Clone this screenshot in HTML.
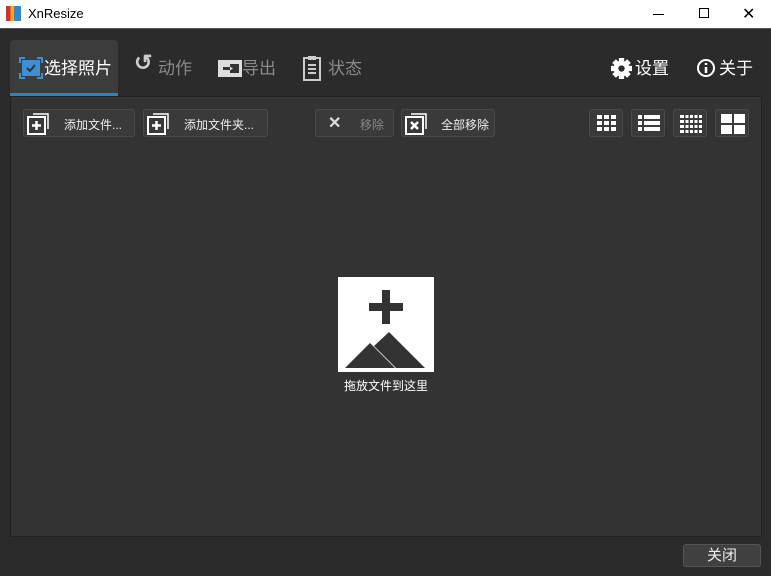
<!DOCTYPE html>
<html><head><meta charset="utf-8"><style>
*{margin:0;padding:0;box-sizing:border-box}
body{width:771px;height:576px;background:#2b2b2b;font-family:"Liberation Sans","Noto Sans CJK SC",sans-serif;position:relative;overflow:hidden;color:#fff}
.a{position:absolute}
.title{left:0;top:0;width:771px;height:29px;background:#fff;border-bottom:1px solid #555;color:#000;font-size:13px}
.btn{position:absolute;height:28px;background:#3a3a3a;border:1px solid #4a4a4a;border-radius:3px;font-size:12px;color:#eee;font-weight:normal}
.tab{position:absolute;top:54px;font-size:17px;color:#8a8a8a;font-weight:normal}
.vb{position:absolute;top:109px;width:34px;height:28px;background:#3a3a3a;border:1px solid #4a4a4a;border-radius:3px}
</style></head><body>
<div class="a title">
 <div class="a" style="left:6px;top:6px;width:15px;height:15px;background:linear-gradient(90deg,#c33 0 30%,#fa0 30% 55%,#38c 55%)"></div>
 <div class="a" style="left:28px;top:6px">XnResize</div>
 <div class="a" style="left:653px;top:14px;width:11px;height:1px;background:#000"></div>
 <div class="a" style="left:699px;top:8px;width:10px;height:10px;border:1px solid #000"></div>
 <div class="a" style="left:742px;top:4px;font-size:16px">✕</div>
</div>
<div class="a" style="left:10px;top:40px;width:108px;height:56px;background:#3c3c3c;border-radius:4px 4px 0 0;border-bottom:3px solid #1e88d0"></div>
<div class="a" style="left:10px;top:96px;width:752px;height:441px;background:#333;border:1px solid #222"></div>
<svg class="a" style="left:19px;top:57px" width="24" height="22"><rect x="3" y="3" width="18" height="16" fill="#3d8fd8"/><path d="M1 6V1h5M18 1h5v5M23 16v5h-5M6 21H1v-5" stroke="#3d8fd8" stroke-width="2" fill="none"/><path d="M8 11l3 3 5-6" stroke="#333" stroke-width="2" fill="none"/></svg>
<div class="tab" style="left:44px;color:#fff">选择照片</div>
<div class="tab" style="left:134px;font-size:22px;top:50px;color:#ccc;font-weight:bold">↺</div>
<div class="tab" style="left:158px">动作</div>
<svg class="a" style="left:218px;top:60px" width="24" height="17"><rect width="24" height="17" fill="#ddd"/><rect x="12" y="4" width="9" height="9" fill="#333"/><path d="M5 7h7V4l5 4.5-5 4.5V10H5z" fill="#333"/><path d="M12 6.5l3 2-3 2z" fill="#ddd"/></svg>
<div class="tab" style="left:242px">导出</div>
<svg class="a" style="left:303px;top:55px" width="18" height="26"><rect x="1" y="3" width="16" height="22" fill="none" stroke="#ccc" stroke-width="2"/><rect x="5" y="1" width="8" height="4" fill="#ccc"/><path d="M5 10h8M5 14h8M5 18h8" stroke="#ccc" stroke-width="2"/></svg>
<div class="tab" style="left:328px">状态</div>
<svg class="a" style="left:611px;top:58px" width="21" height="21" viewBox="0 0 20 20"><g fill="#fff" transform="translate(10 10)"><rect x="-2.5" y="-10" width="5" height="20"/><rect x="-2.5" y="-10" width="5" height="20" transform="rotate(45)"/><rect x="-2.5" y="-10" width="5" height="20" transform="rotate(90)"/><rect x="-2.5" y="-10" width="5" height="20" transform="rotate(135)"/><circle r="7.5"/><circle r="3" fill="#2b2b2b"/></g></svg>
<div class="tab" style="left:635px;color:#fff">设置</div>
<svg class="a" style="left:696px;top:58px" width="20" height="20"><circle cx="10" cy="10" r="8" fill="none" stroke="#fff" stroke-width="2"/><path d="M10 9v6M10 5v2" stroke="#fff" stroke-width="2.5"/></svg>
<div class="tab" style="left:719px;color:#fff">关于</div>

<div class="btn" style="left:23px;top:109px;width:112px"><svg class="a" style="left:3px;top:2px" width="24" height="24"><rect x="1" y="5" width="17" height="17" fill="none" stroke="#fff" stroke-width="2"/><path d="M6 2h15v15" stroke="#fff" stroke-width="1.5" fill="none"/><path d="M9.5 9v9M5 13.5h9" stroke="#fff" stroke-width="2.5"/></svg><span class="a" style="left:40px;top:6px">添加文件...</span></div>
<div class="btn" style="left:143px;top:109px;width:125px"><svg class="a" style="left:3px;top:2px" width="24" height="24"><rect x="1" y="5" width="17" height="17" fill="none" stroke="#fff" stroke-width="2"/><path d="M6 2h15v15" stroke="#fff" stroke-width="1.5" fill="none"/><path d="M9.5 9v9M5 13.5h9" stroke="#fff" stroke-width="2.5"/></svg><span class="a" style="left:40px;top:6px">添加文件夹...</span></div>
<div class="btn" style="left:315px;top:109px;width:79px;color:#888"><span class="a" style="left:12px;top:3px;font-size:16px;color:#ddd;font-weight:bold">✕</span><span class="a" style="left:44px;top:6px">移除</span></div>
<div class="btn" style="left:401px;top:109px;width:94px"><svg class="a" style="left:3px;top:2px" width="24" height="24"><rect x="1" y="5" width="17" height="17" fill="none" stroke="#fff" stroke-width="2"/><path d="M6 2h15v15" stroke="#fff" stroke-width="1.5" fill="none"/><path d="M6 10l7 7M13 10l-7 7" stroke="#fff" stroke-width="2.5"/></svg><span class="a" style="left:39px;top:6px">全部移除</span></div>

<div class="vb" style="left:589px"><svg class="a" style="left:7px;top:5px" width="20" height="17"><g fill="#fff"><rect x="0" y="0" width="5" height="4"/><rect x="7" y="0" width="5" height="4"/><rect x="14" y="0" width="5" height="4"/><rect x="0" y="6" width="5" height="4"/><rect x="7" y="6" width="5" height="4"/><rect x="14" y="6" width="5" height="4"/><rect x="0" y="12" width="5" height="4"/><rect x="7" y="12" width="5" height="4"/><rect x="14" y="12" width="5" height="4"/></g></svg></div>
<div class="vb" style="left:631px"><svg class="a" style="left:6px;top:5px" width="22" height="17"><g fill="#fff"><rect x="0" y="0" width="4" height="4"/><rect x="6" y="0" width="16" height="4"/><rect x="0" y="6" width="4" height="4"/><rect x="6" y="6" width="16" height="4"/><rect x="0" y="12" width="4" height="4"/><rect x="6" y="12" width="16" height="4"/></g></svg></div>
<div class="vb" style="left:673px"><svg class="a" style="left:6px;top:5px" width="22" height="18"><g fill="#fff"><rect width="22" height="3"/><rect y="5" width="22" height="3"/><rect y="10" width="22" height="3"/><rect y="15" width="22" height="3"/></g><g fill="#3a3a3a"><rect x="4" width="1.5" height="18"/><rect x="8.5" width="1.5" height="18"/><rect x="13" width="1.5" height="18"/><rect x="17.5" width="1.5" height="18"/></g></svg></div>
<div class="vb" style="left:715px"><svg class="a" style="left:5px;top:4px" width="24" height="20"><g fill="#fff"><rect width="11" height="9"/><rect x="13" width="11" height="9"/><rect y="11" width="11" height="9"/><rect x="13" y="11" width="11" height="9"/></g></svg></div>

<svg class="a" style="left:338px;top:277px" width="96" height="95"><rect width="96" height="95" fill="#fff"/><path d="M44 13h8v13h13v8H52v13h-8V34H31v-8h13z" fill="#333"/><path d="M7 91l25-25 25 25z" fill="#333"/><path d="M36 69l15-14 36 36H58z" fill="#333"/></svg>
<div class="a" style="left:344px;top:377px;font-size:12px">拖放文件到这里</div>

<div class="btn" style="left:683px;top:544px;width:78px;height:23px;font-size:15px;text-align:center;line-height:21px;background:#404040;border-color:#555">关闭</div>
</body></html>
